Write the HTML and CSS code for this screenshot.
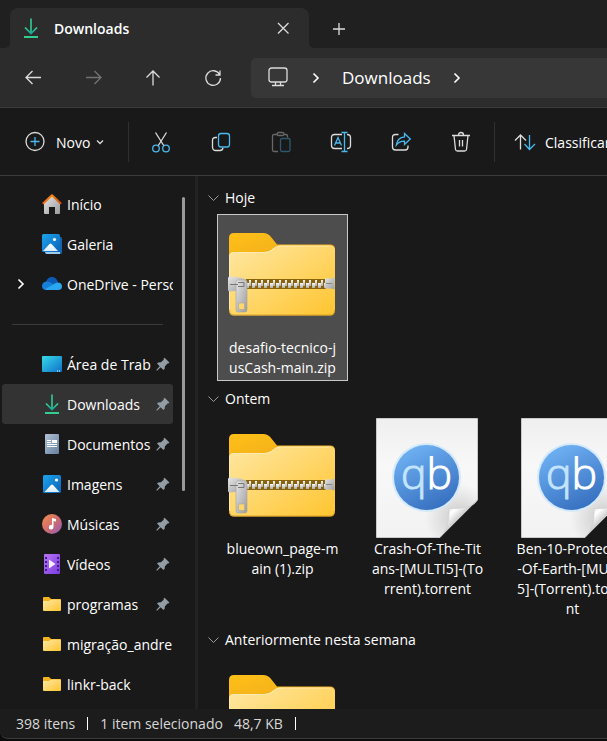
FILE: index.html
```html
<!DOCTYPE html>
<html lang="pt-BR">
<head>
<meta charset="utf-8">
<meta name="viewport" content="width=device-width, initial-scale=1">
<title>Downloads</title>
<link rel="stylesheet" href="styles.css">
</head>
<body>
<svg class="defs" aria-hidden="true">
  <defs>
    <linearGradient id="g-dl" x1="0" y1="0" x2="0" y2="1"><stop offset="0" stop-color="#3bd08f"/><stop offset="1" stop-color="#12a5a0"/></linearGradient>
    <linearGradient id="g-back" x1="0" y1="0" x2="1" y2="1"><stop offset="0" stop-color="#ffc018"/><stop offset="1" stop-color="#e9a31c"/></linearGradient>
    <linearGradient id="g-front" x1="0" y1="0" x2="1" y2="1"><stop offset="0" stop-color="#ffe7a3"/><stop offset="1" stop-color="#ffc52f"/></linearGradient>
    <linearGradient id="g-metal" x1="0" y1="0" x2="1" y2="1"><stop offset="0" stop-color="#e6e6e6"/><stop offset="1" stop-color="#9b9b9b"/></linearGradient>
    <linearGradient id="g-tooth" x1="0" y1="0" x2="0" y2="1"><stop offset="0" stop-color="#fafafa"/><stop offset="1" stop-color="#aeaba4"/></linearGradient>
    <pattern id="p-teeth" x="24" y="62" width="6" height="10" patternUnits="userSpaceOnUse">
      <rect width="6" height="10" fill="#8a640c"/>
      <rect x="0" y="4" width="3" height="5" fill="url(#g-tooth)"/>
      <rect x="3" y="1" width="2" height="6" fill="url(#g-tooth)"/>
    </pattern>
    <linearGradient id="g-page" x1="0" y1="0" x2="0" y2="1"><stop offset="0" stop-color="#efefef"/><stop offset=".4" stop-color="#f8f8f8"/><stop offset="1" stop-color="#f2f2f2"/></linearGradient>
    <linearGradient id="g-curl" gradientUnits="userSpaceOnUse" x1="80" y1="88" x2="93" y2="101"><stop offset="0" stop-color="#d8d8d8"/><stop offset=".45" stop-color="#ffffff"/><stop offset="1" stop-color="#c6c6c6"/></linearGradient>
    <radialGradient id="g-shade" gradientUnits="userSpaceOnUse" cx="92" cy="100" r="34"><stop offset=".2" stop-color="#000" stop-opacity=".14"/><stop offset="1" stop-color="#000" stop-opacity="0"/></radialGradient>
    <linearGradient id="g-qb" x1=".2" y1="0" x2=".7" y2="1"><stop offset="0" stop-color="#72b4f5"/><stop offset="1" stop-color="#356ebf"/></linearGradient>
    <linearGradient id="g-blue" x1="0" y1="0" x2="1" y2="1"><stop offset="0" stop-color="#1ba4ec"/><stop offset="1" stop-color="#0c62b8"/></linearGradient>
    <linearGradient id="g-snow" x1="0" y1="0" x2="0" y2="1"><stop offset="0" stop-color="#fff"/><stop offset="1" stop-color="#d8ecfb"/></linearGradient>
    <linearGradient id="g-desk" x1="0" y1="0" x2="1" y2="1"><stop offset="0" stop-color="#36dbe8"/><stop offset="1" stop-color="#0f6fca"/></linearGradient>
    <linearGradient id="g-doc" x1="0" y1="0" x2="1" y2="1"><stop offset="0" stop-color="#b4c2d6"/><stop offset="1" stop-color="#64809f"/></linearGradient>
    <linearGradient id="g-music" x1="0" y1="0" x2="1" y2="1"><stop offset="0" stop-color="#f2914c"/><stop offset=".5" stop-color="#d36c6c"/><stop offset="1" stop-color="#8a5bc0"/></linearGradient>
    <linearGradient id="g-video" x1="0" y1="0" x2="1" y2="1"><stop offset="0" stop-color="#b874f6"/><stop offset="1" stop-color="#7a3bdc"/></linearGradient>
    <linearGradient id="g-roof" x1="0" y1="0" x2="1" y2="0"><stop offset="0" stop-color="#f0641c"/><stop offset=".5" stop-color="#ee8a10"/><stop offset="1" stop-color="#d0430f"/></linearGradient>
  </defs>

  <symbol id="download" viewBox="0 0 20 20">
    <path d="M10 .5V15" fill="none" stroke="#2fc592" stroke-width="1.700"/>
    <path d="M4 9.500l6 6 6-6" fill="none" stroke="url(#g-dl)" stroke-width="1.700"/>
    <path d="M3 19h14" fill="none" stroke="#33cd90" stroke-width="2"/>
  </symbol>
  <symbol id="chev-right" viewBox="0 0 12 12"><path d="M3.500 1.500L8 6l-4.500 4.500" fill="none" stroke="currentColor" stroke-width="1.600"/></symbol>
  <symbol id="chev-down" viewBox="0 0 12 12"><path d="M.5 3.500l5 5 5-5" fill="none" stroke="currentColor"/></symbol>
  <symbol id="pin" viewBox="0 0 14 14"><path d="M8.600.8l4.800 4.700-1 1-.9-.1-2.600 2.800-.2 2.600-1.300 1.300L4.700 10.200 1 13.700.3 13.100 3.700 9.200 1 6.500l1.200-1.100 2.700-.1 2.800-2.600-.1-1z" fill="#929da5"/></symbol>
  <symbol id="folder" viewBox="0 0 20 20">
    <path d="M1 4q0-1 1-1h5l2 2h9q1 0 1 1v3H1z" fill="#f5b21b"/>
    <path d="M1 7h6l2-1.400h9q1 0 1 1V16q0 1-1 1H2q-1 0-1-1z" fill="url(#g-front)"/>
  </symbol>
  <symbol id="zip" viewBox="0 0 121 120">
    <path d="M7 21q0-5 5-5h29q5 0 8 4l6 7.500h53q5 0 5 5v20H7z" fill="url(#g-back)"/>
    <path d="M7 40q0-5 5-5h30q4 0 7-2l4-3q2-1.500 5-1.500h50q5 0 5 5V93q0 5.500-5 5.500H12q-5 0-5-5.500z" fill="url(#g-front)"/>
    <path d="M7.500 93q0 5 5 5h95q5 0 5-5" fill="none" stroke="#d4961b" opacity=".8"/>
    <path d="M7.500 92V40q0-4.500 5-4.500h30q4 0 7-2l4-3q2-1.500 5-1.500h50" fill="none" stroke="#fff0c0" opacity=".7"/>
    <rect x="24" y="62" width="80" height="10" fill="url(#p-teeth)"/>
    <path d="M103 61.500h6l3.500-1v12l-3.500-1h-6z" fill="url(#g-metal)"/><path d="M104 66.500h6" stroke="#888"/>
    <path d="M6 61q0-1.500 2-1.500l10 1 6 2v9l-6 2-10 1q-2 0-2-1.500z" fill="url(#g-metal)"/>
    <path d="M14 65q0-2 2-2h7q2 0 2 2v28q0 2-2 2h-7q-2 0-2-2zM16.500 86v6.500h6V86z" fill="url(#g-metal)" fill-rule="evenodd" stroke="#a3a3a3" stroke-width=".6"/>
    <path d="M8 67.500h8M16 65.500h6v4h-6" fill="none" stroke="#777"/>
  </symbol>
  <symbol id="torrent" viewBox="0 0 121 120">
    <path d="M9.500.5h101V82L73 119.500H9.500z" fill="url(#g-page)"/>
    <path d="M9.500.5h101V82L73 119.500H9.500z" fill="url(#g-shade)"/>
    <path d="M9.500 119.500V.5h101V82M9.500 119.500H73" fill="none" stroke="#c9c9c9"/>
    <circle cx="59.500" cy="59.500" r="34.500" fill="#d3e9fd"/>
    <circle cx="59.500" cy="59.500" r="32.500" fill="url(#g-qb)"/>
    <text x="59.500" y="71" text-anchor="middle" class="qb"><tspan fill="#c3e4ff" stroke="#c3e4ff">q</tspan><tspan fill="#fff" stroke="#fff">b</tspan></text>
    <path d="M110.500 82q-4 9-28.500 8.500 1 20-9 29z" fill="url(#g-curl)"/>
    <path d="M110.500 82q-4 9-28.500 8.500 1 20-9 29" fill="none" stroke="#cfcfcf" stroke-width=".7"/>
  </symbol>
</svg>

<header class="titlebar">
  <div class="tab">
    <svg class="i20"><use href="#download"/></svg>
    <span class="tab-title">Downloads</span>
    <button class="icon-btn close" aria-label="Fechar guia"><svg class="i24" viewBox="0 0 24 24"><path d="M7 7l10.500 10.500M17.500 7L7 17.500" class="ln"/></svg></button>
  </div>
  <button class="icon-btn" aria-label="Nova guia"><svg class="i24" viewBox="0 0 24 24"><path d="M12 7v12M6 13h12" class="ln"/></svg></button>
</header>

<nav class="navbar" aria-label="Navegação">
  <button class="icon-btn" aria-label="Voltar"><svg class="i24" viewBox="0 0 24 24"><path d="M20 11.500H5M11.500 5L5 11.500l6.500 6.500" class="ln"/></svg></button>
  <button class="icon-btn dim" aria-label="Avançar"><svg class="i24" viewBox="0 0 24 24"><path d="M5 11.500h15M13.500 5l6.500 6.500-6.500 6.500" class="ln"/></svg></button>
  <button class="icon-btn" aria-label="Acima"><svg class="i24" viewBox="0 0 24 24"><path d="M12 19.500V5M5.500 11.500L12 5l6.500 6.500" class="ln"/></svg></button>
  <button class="icon-btn" aria-label="Atualizar"><svg class="i24" viewBox="0 0 24 24"><path d="M18.600 8.500A7.300 7.300 0 1 0 19.500 12M19 4.500v4.500h-4.500" class="ln"/></svg></button>
  <div class="address">
    <svg class="i24 pc" viewBox="0 0 24 24"><rect x="3" y="2" width="18" height="14" rx="2.500" class="ln"/><path d="M9.500 16v3M14.500 16v3M6 19.500h12" class="ln"/></svg>
    <svg class="i12"><use href="#chev-right"/></svg>
    <a href="#downloads">Downloads</a>
    <svg class="i12"><use href="#chev-right"/></svg>
  </div>
</nav>

<div class="toolbar" role="toolbar" aria-label="Comandos">
  <button class="new"><svg class="i24" viewBox="0 0 24 24"><circle cx="12" cy="11.500" r="9" class="ln"/><path d="M12 7v9M7.500 11.500h9" class="bl"/></svg><span>Novo</span><svg class="chev" viewBox="0 0 12 12"><path d="M2 4.500L5 7.500l3-3" class="ln"/></svg></button>
  <span class="rule"></span>
  <button class="icon-btn" aria-label="Recortar"><svg class="i24" viewBox="0 0 24 24"><path d="M6.500 2.500l8.500 13.500M17.500 2.500L9 16" class="ln"/><circle cx="7" cy="18.500" r="3.300" class="bl"/><circle cx="17" cy="18.500" r="3.300" class="bl"/></svg></button>
  <button class="icon-btn" aria-label="Copiar"><svg class="i24" viewBox="0 0 24 24"><path d="M8 7.500H6.500Q3.500 7.500 3.500 10.500V17q0 3.500 3.500 3.500h4q2.500 0 3-2.500" class="ln"/><rect x="9.500" y="3.500" width="11" height="13.500" rx="2.500" class="bl"/></svg></button>
  <button class="icon-btn dim" aria-label="Colar"><svg class="i24" viewBox="0 0 24 24"><path d="M8.500 4.500H5q-1.500 0-1.500 1.500v14q0 1.500 1.500 1.500h4M15 4.500h2q1.500 0 1.500 1.500v1.500" class="ln"/><rect x="8" y="2.500" width="7" height="3" rx="1.500" class="ln"/><rect x="11.500" y="8.500" width="9.500" height="13" rx="1.500" class="bl"/></svg></button>
  <button class="icon-btn" aria-label="Renomear"><svg class="i24" viewBox="0 0 24 24"><path d="M13 4.500H5.500Q2.500 4.500 2.500 7.500v8q0 3 3 3H13M18 4.500q3.500 0 3.500 3v8q0 3-3.500 3" class="ln"/><path d="M5.500 15.500L9 7.500l3.500 8M6.800 13h4.500M12.500 2.500h6M15.500 2.500v19M12.500 21.500h6" class="bl"/></svg></button>
  <button class="icon-btn" aria-label="Compartilhar"><svg class="i24" viewBox="0 0 24 24"><path d="M9.500 4.500H6.500Q3.500 4.500 3.500 7.500v9.500q0 3 3 3h9.500q3 0 3-3v-1.500" class="ln"/><path d="M15.500 3.500l5.800 5.500-5.800 5.500v-3.300q-5-.2-8.200 3.800 1-7.500 8.200-8.200z" class="bl"/></svg></button>
  <button class="icon-btn" aria-label="Excluir"><svg class="i24" viewBox="0 0 24 24"><path d="M3 5.500h18M5 5.500l1.500 14q.2 1.500 2 1.500h7q1.800 0 2-1.500l1.500-14M9.500 5q0-2.500 2.500-2.500T14.500 5M10.500 10v6.500M13.500 10v6.500" class="ln"/></svg></button>
  <span class="rule last"></span>
  <button class="sort"><svg class="i24" viewBox="0 0 24 24"><path d="M7.500 19.500V5M2 10.500L7.500 5l5.500 5.500" class="ln"/><path d="M16.500 5v14.500M11.500 14l5 5.500 5.500-5.500" class="bl"/></svg><span>Classificar</span></button>
</div>

<div class="content">
  <aside class="sidebar">
    <nav class="places" aria-label="Locais">
      <a class="place" href="#inicio"><span class="exp"></span><svg class="i20" viewBox="0 0 20 20"><path d="M2 9l8-7.500L18 9v10q0 1-1 1h-4v-7H7v7H3q-1 0-1-1z" fill="url(#g-metal)"/><path d="M.8 9.800L10 1.300l9.200 8.500" fill="none" stroke="url(#g-roof)" stroke-width="2.200" stroke-linejoin="round"/></svg><span class="name">Início</span></a>
      <a class="place" href="#galeria"><span class="exp"></span><svg class="i20" viewBox="0 0 20 20"><path d="M4 3h14.500q1.500 0 1.500 1.500V18.500q0 1.500-1.500 1.500H5q-1.500 0-1.500-1.500z" fill="#1463ae"/><path d="M3 18h15v2H5q-2 0-2-2z" fill="#9fcaea"/><rect width="18" height="18" rx="1.500" fill="url(#g-blue)"/><path d="M1 17l6.500-7q1-1 2 0l6.500 7z" fill="url(#g-snow)"/><circle cx="12.500" cy="5.500" r="1.600" fill="#fff"/></svg><span class="name">Galeria</span></a>
      <a class="place" href="#onedrive"><span class="exp"><svg class="i12"><use href="#chev-right"/></svg></span><svg class="i20" viewBox="0 0 20 20"><path d="M4 8Q5.500 3 10 3q4 0 6 5l-5 5z" fill="#0b5bb5"/><path d="M4.500 16Q0 16 0 12T4.500 7.500q3-.5 6.500 2.500l4 4z" fill="#1480d8"/><path d="M3 15.200L12 10q1.500-1.500 3.500-1.500Q20 8.500 20 12.500 20 16 16 16H5q-1 0-2-.8z" fill="#2aa7f0"/></svg><span class="name">OneDrive - Personal</span></a>
      <hr>
      <a class="place pinned" href="#desktop"><span class="exp"></span><svg class="i20" viewBox="0 0 20 20"><rect y="2" width="20" height="16" rx="1" fill="url(#g-desk)"/><path d="M15 17h1M17 17h1" stroke="#fff"/></svg><span class="name">Área de Trab</span><svg class="i14"><use href="#pin"/></svg></a>
      <a class="place pinned current" href="#downloads" aria-current="page"><span class="exp"></span><svg class="i20"><use href="#download"/></svg><span class="name">Downloads</span><svg class="i14"><use href="#pin"/></svg></a>
      <a class="place pinned" href="#documentos"><span class="exp"></span><svg class="i20" viewBox="0 0 20 20"><rect x="3" width="14" height="20" rx="1" fill="url(#g-doc)"/><path d="M5 6.500h4M5 8.500h4M5 10.500h10M5 12.500h10" stroke="#fff"/><rect x="10" y="6" width="5" height="3" fill="#fff"/></svg><span class="name">Documentos</span><svg class="i14"><use href="#pin"/></svg></a>
      <a class="place pinned" href="#imagens"><span class="exp"></span><svg class="i20" viewBox="0 0 20 20"><rect x="1" y="1" width="18" height="18" rx="1.500" fill="url(#g-blue)"/><path d="M2.500 18L9 11q1-1 2 0l6.500 7z" fill="url(#g-snow)"/><circle cx="14.500" cy="6" r="1.600" fill="#fff"/></svg><span class="name">Imagens</span><svg class="i14"><use href="#pin"/></svg></a>
      <a class="place pinned" href="#musicas"><span class="exp"></span><svg class="i20" viewBox="0 0 20 20"><circle cx="10" cy="10" r="10" fill="url(#g-music)"/><path d="M10 4l4 1v2.500l-2.500-.5v6a2.300 2.300 0 1 1-1.500-2z" fill="#fff"/></svg><span class="name">Músicas</span><svg class="i14"><use href="#pin"/></svg></a>
      <a class="place pinned" href="#videos"><span class="exp"></span><svg class="i20" viewBox="0 0 20 20"><rect x="2" width="16" height="20" rx="1" fill="url(#g-video)"/><path d="M4 3v15M16 3v15" stroke="#3f1d86" stroke-width="2" stroke-dasharray="2 2"/><path d="M7 5.500l6.500 4.500L7 14.500z" fill="#f4eefe"/></svg><span class="name">Vídeos</span><svg class="i14"><use href="#pin"/></svg></a>
      <a class="place pinned" href="#programas"><span class="exp"></span><svg class="i20"><use href="#folder"/></svg><span class="name">programas</span><svg class="i14"><use href="#pin"/></svg></a>
      <a class="place" href="#migracao"><span class="exp"></span><svg class="i20"><use href="#folder"/></svg><span class="name">migração_andre</span></a>
      <a class="place" href="#linkr"><span class="exp"></span><svg class="i20"><use href="#folder"/></svg><span class="name">linkr-back</span></a>
    </nav>
    <div class="scroll"></div>
  </aside>

  <main class="files">
    <h2><svg class="i12"><use href="#chev-down"/></svg>Hoje</h2>
    <div class="row">
      <button class="file selected"><svg class="thumb"><use href="#zip"/></svg><span>desafio-tecnico-j<br>usCash-main.zip</span></button>
    </div>
    <h2><svg class="i12"><use href="#chev-down"/></svg>Ontem</h2>
    <div class="row">
      <button class="file"><svg class="thumb"><use href="#zip"/></svg><span>blueown_page-m<br>ain (1).zip</span></button>
      <button class="file"><svg class="thumb"><use href="#torrent"/></svg><span>Crash-Of-The-Tit<br>ans-[MULTI5]-(To<br>rrent).torrent</span></button>
      <button class="file"><svg class="thumb"><use href="#torrent"/></svg><span>Ben-10-Protector<br>-Of-Earth-[MULTI<br>5]-(Torrent).torre<br>nt</span></button>
    </div>
    <h2><svg class="i12"><use href="#chev-down"/></svg>Anteriormente nesta semana</h2>
    <div class="row">
      <button class="file" aria-label="Pasta compactada"><svg class="thumb"><use href="#zip"/></svg></button>
    </div>
  </main>
</div>

<footer class="status">
  <span>398 itens</span><i></i><span>1 item selecionado</span><span class="size">48,7 KB</span><i></i>
</footer>
</body>
</html>
```
FILE: styles.css
```css
* { box-sizing: border-box; }

body {
  margin: 0;
  height: 100vh;
  display: flex;
  flex-direction: column;
  overflow: hidden;
  background: #0c0c0c;
  color: #fff;
  font: 14px/20px "Segoe UI", "Open Sans", "Noto Sans", sans-serif;
}

button {
  margin: 0;
  padding: 0;
  border: 0;
  background: none;
  color: inherit;
  font: inherit;
}

a { color: inherit; text-decoration: none; }
svg { display: block; flex: none; }

.defs { position: absolute; width: 0; height: 0; }
.i12 { width: 12px; height: 12px; }
.i14 { width: 14px; height: 14px; }
.i20 { width: 20px; height: 20px; }
.i24 { width: 24px; height: 24px; }

.ln { fill: none; stroke: #dcdcdc; stroke-width: 1.3; }
.bl { fill: none; stroke: #4cb8f0; stroke-width: 1.3; }
.dim { opacity: .4; }

.icon-btn {
  flex: none;
  width: 60px;
  height: 40px;
  display: flex;
  align-items: center;
  justify-content: center;
}

/* Title bar */
.titlebar {
  flex: none;
  display: flex;
  padding: 8px 0 0 10px;
  background: #202020;
}

.tab {
  position: relative;
  flex: none;
  width: 299px;
  height: 40px;
  display: flex;
  align-items: center;
  padding: 0 14px 0 11px;
  border-radius: 8px 8px 0 0;
  background: #2c2c2c;
}

.tab::before,
.tab::after {
  content: "";
  position: absolute;
  bottom: 0;
  width: 5px;
  height: 5px;
}
.tab::before { left: -5px; background: radial-gradient(circle at 0 0, transparent 5px, #2c2c2c 5px); }
.tab::after { right: -5px; background: radial-gradient(circle at 100% 0, transparent 5px, #2c2c2c 5px); }

.tab-title { margin: 0 auto 0 13px; padding-top: 2px; font-weight: 600; }
.close { width: 24px; }

/* Navigation */
.navbar {
  flex: none;
  height: 60px;
  display: flex;
  align-items: center;
  padding-left: 3px;
  border-bottom: 1px solid #3b3b3b;
  background: #2c2c2c;
}

.address {
  flex: 1;
  height: 40px;
  display: flex;
  align-items: center;
  gap: 20px;
  margin-left: 8px;
  padding-left: 15px;
  border-radius: 5px 0 0 5px;
  background: #373737;
  font-size: 17px;
}

/* Commands */
.toolbar {
  flex: none;
  height: 68px;
  display: flex;
  align-items: center;
  border-bottom: 1px solid #3b3b3b;
  background: #191919;
}

.new {
  flex: none;
  width: 128px;
  height: 40px;
  display: flex;
  align-items: center;
  padding-left: 23px;
}
.new span { margin: 0 5px 0 9px; padding-top: 2px; }
.chev { width: 12px; height: 12px; }

.rule { flex: none; width: 1px; height: 40px; margin-right: 2px; background: #303030; }
.rule.last { margin: 0 18px 0 3px; }

.sort { flex: none; display: flex; align-items: center; gap: 8px; }
.sort span { padding-top: 2px; }

/* Body */
.content {
  flex: 1;
  min-height: 0;
  display: flex;
  background: #191919;
}

.sidebar {
  flex: none;
  width: 198px;
  display: flex;
  overflow: hidden;
  padding: 8px 0 0 2px;
  border-right: 3px solid #222;
}

.places { flex: none; width: 171px; }

.place {
  height: 40px;
  display: flex;
  align-items: center;
  border-radius: 3px;
}
.place.pinned { padding-right: 3px; }
.place.current { background: #333; }

.exp { width: 40px; flex: none; padding-left: 13px; }

.name {
  flex: 1;
  min-width: 0;
  overflow: hidden;
  margin-left: 5px;
  padding-top: 2px;
  white-space: nowrap;
}

hr {
  height: 1px;
  margin: 20px 10px 19px;
  border: 0;
  background: #3a3a3a;
}

.scroll {
  width: 3px;
  height: 56%;
  margin: 13px 0 0 9px;
  border-radius: 2px;
  background: #9a9a9a;
}

/* Files */
.files {
  flex: 1;
  min-width: 0;
  overflow: hidden;
  padding: 4px 0 0 10px;
}

h2 {
  height: 34px;
  display: flex;
  align-items: center;
  gap: 5px;
  margin: 0;
  padding-top: 2px;
  font-size: 14px;
  font-weight: 400;
}
h2 svg { color: #9a9a9a; }

.row {
  display: flex;
  align-items: flex-start;
  gap: 14px;
  padding-left: 9px;
}

.file {
  flex: none;
  width: 131px;
  padding: 2px 0;
  border: 1px solid transparent;
  text-align: center;
  white-space: nowrap;
}
.file.selected { border-color: #c8c8c8; background: #4d4d4d; }

.thumb { width: 121px; height: 120px; margin: 0 4px; }
.file span { display: block; padding-top: 1px; }
.qb { font: 300 43px "Open Sans", sans-serif; stroke-width: 1; }

/* Status */
.status {
  flex: none;
  height: 30px;
  display: flex;
  align-items: center;
  margin-bottom: 2px;
  padding-left: 16px;
  border-bottom: 1px solid #3b3b3b;
  border-radius: 0 0 0 8px;
  background: #1c1c1c;
  color: #d8d8d8;
}
.status i { width: 1px; height: 13px; margin: 0 12px; background: #fff; }
.size { margin-left: 11px; }
```
